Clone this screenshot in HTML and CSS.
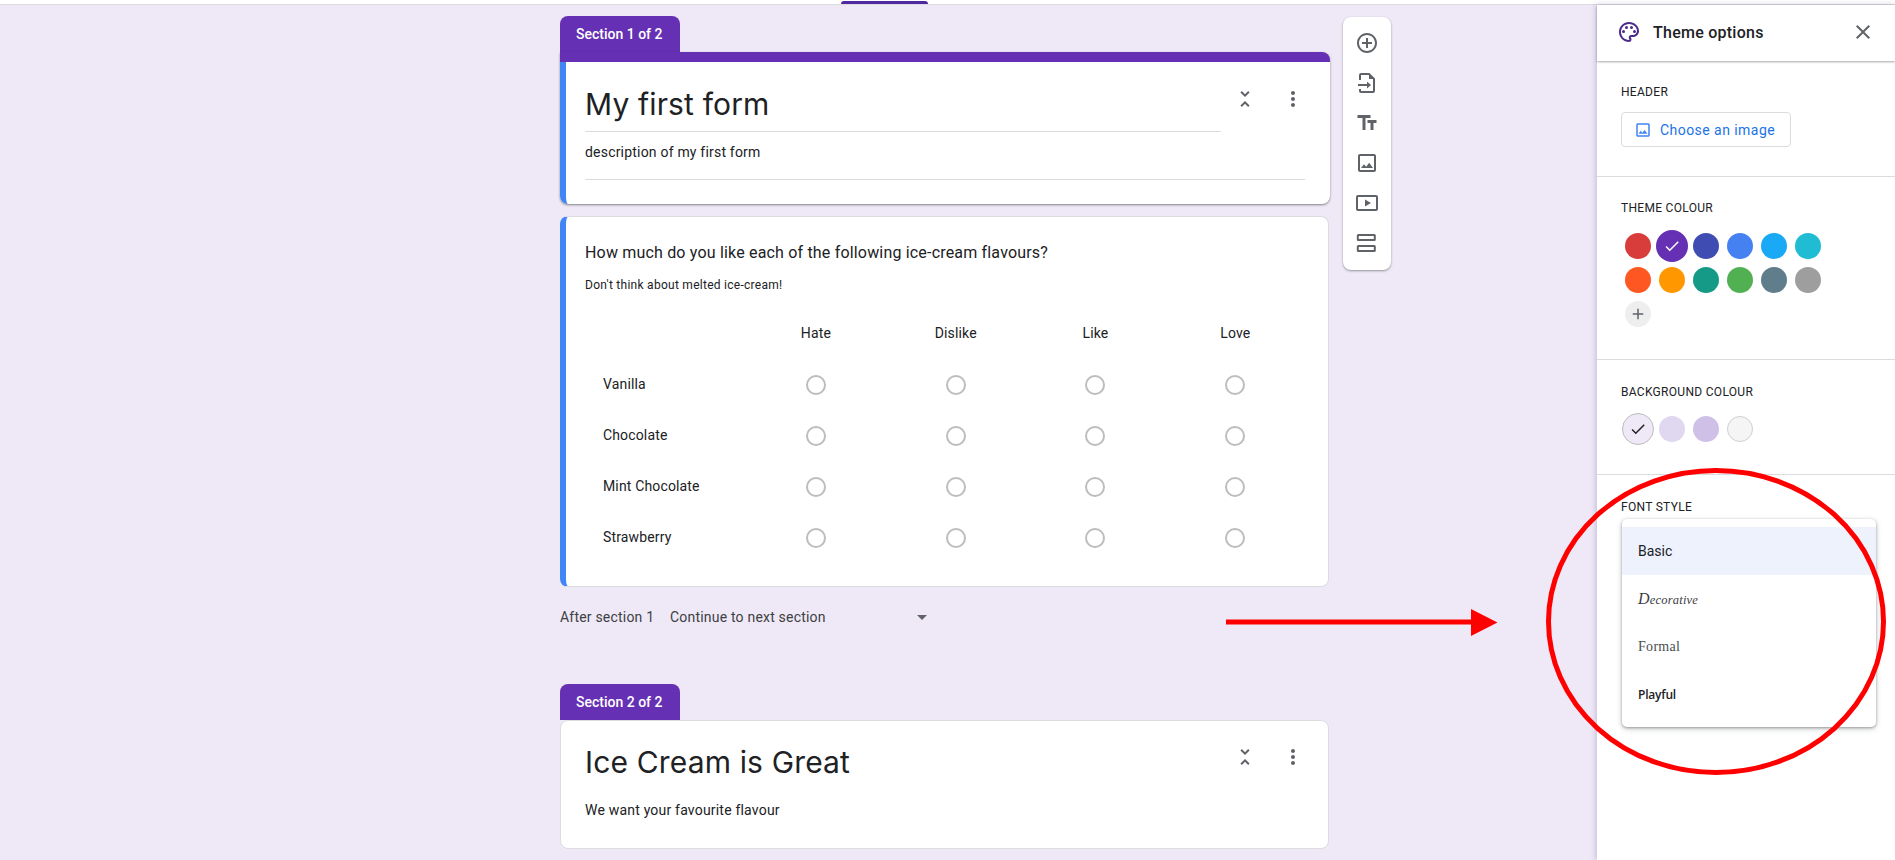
FILE: index.html
```html
<!DOCTYPE html>
<html lang="en">
<head>
    <meta charset="UTF-8">
    <meta name="viewport" content="width=device-width, initial-scale=1.0">
    <title>My first form</title>
    <link rel="stylesheet" href="styles.css">
</head>
<body>

    <div class="topbar"><div class="topbar-tab"></div></div>

    <div class="main">
        <div class="canvas">
            <div class="form-col">

                <div class="section-tab">Section 1 of 2</div>
                <div class="card-first">
                    <div class="card-first-body">
                        <div class="title-row">
                            <div class="form-title underlined">My first form</div>
                            <div class="actions">
                                <svg class="icon" viewBox="0 0 24 24"><path d="M7.41 18.59L8.83 20 12 16.83 15.17 20l1.41-1.41L12 14l-4.59 4.59zm9.18-13.18L15.17 4 12 7.17 8.83 4 7.41 5.41 12 10l4.59-4.59z"/></svg>
                                <svg class="icon" viewBox="0 0 24 24"><path d="M12 8c1.1 0 2-.9 2-2s-.9-2-2-2-2 .9-2 2 .9 2 2 2zm0 2c-1.1 0-2 .9-2 2s.9 2 2 2 2-.9 2-2-.9-2-2-2zm0 6c-1.1 0-2 .9-2 2s.9 2 2 2 2-.9 2-2-.9-2-2-2z"/></svg>
                            </div>
                        </div>
                        <div class="form-desc underlined">description of my first form</div>
                    </div>
                </div>

                <div class="card card-question">
                    <div class="question">How much do you like each of the following ice-cream flavours?</div>
                    <div class="question-sub">Don't think about melted ice-cream!</div>

                    <div class="grid">
                        <div></div>
                        <div class="grid-head">Hate</div>
                        <div class="grid-head">Dislike</div>
                        <div class="grid-head">Like</div>
                        <div class="grid-head">Love</div>

                        <div class="grid-label">Vanilla</div>
                        <div class="grid-cell"><span class="radio"></span></div>
                        <div class="grid-cell"><span class="radio"></span></div>
                        <div class="grid-cell"><span class="radio"></span></div>
                        <div class="grid-cell"><span class="radio"></span></div>

                        <div class="grid-label">Chocolate</div>
                        <div class="grid-cell"><span class="radio"></span></div>
                        <div class="grid-cell"><span class="radio"></span></div>
                        <div class="grid-cell"><span class="radio"></span></div>
                        <div class="grid-cell"><span class="radio"></span></div>

                        <div class="grid-label">Mint Chocolate</div>
                        <div class="grid-cell"><span class="radio"></span></div>
                        <div class="grid-cell"><span class="radio"></span></div>
                        <div class="grid-cell"><span class="radio"></span></div>
                        <div class="grid-cell"><span class="radio"></span></div>

                        <div class="grid-label">Strawberry</div>
                        <div class="grid-cell"><span class="radio"></span></div>
                        <div class="grid-cell"><span class="radio"></span></div>
                        <div class="grid-cell"><span class="radio"></span></div>
                        <div class="grid-cell"><span class="radio"></span></div>
                    </div>
                </div>

                <div class="after-section">
                    <span class="after-label">After section 1</span>
                    <span class="after-select">Continue to next section<span class="caret"></span></span>
                </div>

                <div class="section-tab section-tab-second">Section 2 of 2</div>
                <div class="card card-second">
                    <div class="title-row">
                        <div class="form-title">Ice Cream is Great</div>
                        <div class="actions">
                            <svg class="icon" viewBox="0 0 24 24"><path d="M7.41 18.59L8.83 20 12 16.83 15.17 20l1.41-1.41L12 14l-4.59 4.59zm9.18-13.18L15.17 4 12 7.17 8.83 4 7.41 5.41 12 10l4.59-4.59z"/></svg>
                            <svg class="icon" viewBox="0 0 24 24"><path d="M12 8c1.1 0 2-.9 2-2s-.9-2-2-2-2 .9-2 2 .9 2 2 2zm0 2c-1.1 0-2 .9-2 2s.9 2 2 2 2-.9 2-2-.9-2-2-2zm0 6c-1.1 0-2 .9-2 2s.9 2 2 2 2-.9 2-2-.9-2-2-2z"/></svg>
                        </div>
                    </div>
                    <div class="form-desc">We want your favourite flavour</div>
                </div>
            </div>

            <div class="toolbar">
                <svg class="icon" viewBox="0 0 24 24"><path d="M13 7h-2v4H7v2h4v4h2v-4h4v-2h-4V7zm-1-5C6.48 2 2 6.48 2 12s4.48 10 10 10 10-4.48 10-10S17.52 2 12 2zm0 18c-4.41 0-8-3.59-8-8s3.59-8 8-8 8 3.59 8 8-3.59 8-8 8z"/></svg>
                <svg class="icon" viewBox="0 0 24 24"><path class="line" d="M5 9V4a1 1 0 0 1 1-1h8l5 5v12a1 1 0 0 1-1 1H6a1 1 0 0 1-1-1v-2"/><path d="M14 3l5 5h-5z"/><path class="line" d="M3 14h10"/><path d="M12 10.5l4 3.5-4 3.5z"/></svg>
                <svg class="icon" viewBox="0 0 24 24"><path d="M2.5 4v3h5v12h3V7h5V4h-13zm19 5h-9v3h3v7h3v-7h3V9z"/></svg>
                <svg class="icon" viewBox="0 0 24 24"><path d="M19 5v14H5V5h14m0-2H5c-1.1 0-2 .9-2 2v14c0 1.1.9 2 2 2h14c1.1 0 2-.9 2-2V5c0-1.1-.9-2-2-2zm-4.86 8.86l-3 3.87L9 13.14 6 17h12l-3.86-5.14z"/></svg>
                <svg class="icon" viewBox="0 0 24 24"><rect class="line" x="2" y="5" width="20" height="14" rx="1"/><path d="M10 8.5l6 3.5-6 3.5z"/></svg>
                <svg class="icon" viewBox="0 0 24 24"><rect class="line" x="2.8" y="4" width="17" height="5" rx="0.5"/><rect class="line" x="2.8" y="15" width="17" height="5" rx="0.5"/></svg>
            </div>
        </div>

        <div class="side">
            <div class="side-head">
                <svg class="icon icon-palette" viewBox="0 0 24 24">
                    <path d="M12 22C6.49 22 2 17.51 2 12S6.49 2 12 2s10 4.04 10 9c0 3.31-2.69 6-6 6h-1.77c-.28 0-.5.22-.5.5 0 .12.05.23.13.33.41.47.64 1.06.64 1.67 0 1.38-1.12 2.5-2.5 2.5zm0-18c-4.41 0-8 3.59-8 8s3.59 8 8 8c.28 0 .5-.22.5-.5 0-.16-.08-.28-.14-.35-.41-.46-.63-1.05-.63-1.65 0-1.38 1.12-2.5 2.5-2.5H16c2.21 0 4-1.79 4-4 0-3.86-3.59-7-8-7z"/>
                    <circle cx="6.5" cy="11.5" r="1.5"/><circle cx="9.5" cy="7.5" r="1.5"/><circle cx="14.5" cy="7.5" r="1.5"/><circle cx="17.5" cy="11.5" r="1.5"/>
                </svg>
                <span class="side-title">Theme options</span>
                <svg class="icon icon-close" viewBox="0 0 24 24"><path d="M19 6.41L17.59 5 12 10.59 6.41 5 5 6.41 10.59 12 5 17.59 6.41 19 12 13.41 17.59 19 19 17.59 13.41 12z"/></svg>
            </div>

            <div class="side-section header-section">
                <div class="side-label">HEADER</div>
                <div class="image-btn">
                    <svg class="icon-small" viewBox="0 0 24 24"><path d="M19 5v14H5V5h14m0-2H5c-1.1 0-2 .9-2 2v14c0 1.1.9 2 2 2h14c1.1 0 2-.9 2-2V5c0-1.1-.9-2-2-2zm-4.86 8.86l-3 3.87L9 13.14 6 17h12l-3.86-5.14z"/></svg>
                    Choose an image
                </div>
            </div>

            <div class="side-section theme-section">
                <div class="side-label">THEME COLOUR</div>
                <div class="swatches">
                    <span class="swatch c-red"></span>
                    <span class="swatch swatch-on c-purple"><svg viewBox="0 0 24 24"><path d="M9 16.17L4.83 12l-1.42 1.41L9 19 21 7l-1.41-1.41z"/></svg></span>
                    <span class="swatch c-indigo"></span>
                    <span class="swatch c-blue"></span>
                    <span class="swatch c-sky"></span>
                    <span class="swatch c-cyan"></span>
                    <span class="swatch c-deep-orange"></span>
                    <span class="swatch c-orange"></span>
                    <span class="swatch c-teal"></span>
                    <span class="swatch c-green"></span>
                    <span class="swatch c-slate"></span>
                    <span class="swatch c-grey"></span>
                    <span class="swatch c-add"><svg viewBox="0 0 24 24"><path d="M19 13h-6v6h-2v-6H5v-2h6V5h2v6h6v2z"/></svg></span>
                </div>
            </div>

            <div class="side-section bg-section">
                <div class="side-label">BACKGROUND COLOUR</div>
                <div class="swatches">
                    <span class="swatch swatch-on bg-1"><svg viewBox="0 0 24 24"><path d="M9 16.17L4.83 12l-1.42 1.41L9 19 21 7l-1.41-1.41z"/></svg></span>
                    <span class="swatch bg-2"></span>
                    <span class="swatch bg-3"></span>
                    <span class="swatch bg-4"></span>
                </div>
            </div>

            <div class="font-section">
                <div class="side-label">FONT STYLE</div>
                <div class="font-menu">
                    <div class="font-item font-basic">Basic</div>
                    <div class="font-item font-decorative">Decorative</div>
                    <div class="font-item font-formal">Formal</div>
                    <div class="font-item font-playful">Playful</div>
                </div>
            </div>
        </div>
    </div>

    <!-- red marks drawn over the screenshot -->
    <svg class="marks" viewBox="0 0 1895 860">
        <rect x="1226" y="619.5" width="246" height="5" fill="#ff0000"/>
        <path d="M1471 609L1497.5 622.4 1471 636z" fill="#ff0000"/>
        <ellipse cx="1716" cy="621.5" rx="167.5" ry="151" fill="none" stroke="#ff0000" stroke-width="5"/>
    </svg>

</body>
</html>
```

FILE: styles.css
```css
html, body {
    margin: 0;
    height: 100%;
}

body {
    position: relative;
    height: 860px;
    overflow: hidden;
    font-family: Roboto, "Liberation Sans", sans-serif;
    color: #202124;
    background-color: #efe9f7;
}

.topbar {
    height: 3px;
    padding-top: 1px;
    background-color: #fff;
    border-bottom: 1px solid #dadce0;
}

.topbar-tab {
    width: 87px;
    height: 3px;
    margin-left: 841px;
    background-color: #5128a0;
    border-radius: 3px 3px 0 0;
}

.main {
    display: flex;
    height: 855px;
}

/* left part, with the form */
.canvas {
    flex: 1;
    display: flex;
    align-items: flex-start;
    gap: 13px;
    padding: 11px 0 0 560px;
}

.form-col {
    width: 770px;
}

.section-tab {
    width: 120px;
    height: 36px;
    line-height: 36px;
    box-sizing: border-box;
    padding-left: 16px;
    font-size: 14px;
    font-weight: 500;
    color: #fff;
    background-color: #6530b3;
    border-radius: 8px 8px 0 0;
}

.section-tab-second {
    margin-top: 57px;
}

.card {
    box-sizing: border-box;
    background-color: #fff;
    border-radius: 8px;
    border: 1px solid #dadce0;
}

.card-first {
    border-top: 10px solid #6530b3;
    border-radius: 0 8px 8px 8px;
    background-color: #fff;
    box-shadow: 0 1px 2px rgba(60, 64, 67, .5), 0 1px 3px rgba(60, 64, 67, .15);
}

.card-first-body {
    border-left: 6px solid #4285f4;
    border-radius: 0 0 8px 8px;
    padding: 0 25px 24px 19px;
}

.card-question {
    margin-top: 12px;
    width: 769px;
    border-left: 6px solid #4285f4;
    padding: 24px 0 23px 19px;
}

.card-second {
    width: 769px;
    padding: 21px 23px 28px 24px;
}

.title-row {
    display: flex;
}

.form-title {
    flex: 1;
    font-family: Inter, Roboto, sans-serif;
    font-size: 30px;
    line-height: 40px;
    letter-spacing: .15px;
    color: #202124;
}

.card-first .form-title {
    margin-top: 22px;
    padding-bottom: 7px;
}

.underlined {
    border-bottom: 1px solid #dadce0;
}

.actions {
    display: flex;
    gap: 24px;
    margin-left: 12px;
    padding-top: 3px;
    align-items: flex-start;
}

.card-first .actions {
    padding-top: 25px;
}

.icon {
    display: block;
    width: 24px;
    height: 24px;
    fill: #5f6368;
}

.icon .line {
    fill: none;
    stroke: #5f6368;
    stroke-width: 2;
}

.form-desc {
    font-size: 14px;
    line-height: 20px;
    letter-spacing: .2px;
    padding: 10px 0 17px;
}

.card-second .form-desc {
    padding: 18px 0 0;
}

.question {
    font-size: 16px;
    line-height: 24px;
    letter-spacing: .18px;
    color: #202124;
}

.question-sub {
    margin-top: 12px;
    font-size: 12px;
    line-height: 16px;
    letter-spacing: .27px;
}

/* matrix of radios */
.grid {
    display: grid;
    grid-template-columns: 143px repeat(4, 139.8px);
    grid-template-rows: 52px repeat(4, 51px);
    margin: 14px 0 0 18px;
    font-size: 14px;
    letter-spacing: .15px;
}

.grid-head, .grid-cell {
    display: flex;
    align-items: center;
    justify-content: center;
}

.grid-label {
    display: flex;
    align-items: center;
    padding-bottom: 1px;
}

.radio {
    width: 20px;
    height: 20px;
    box-sizing: border-box;
    border: 2px solid #bdbdbd;
    border-radius: 50%;
}

.after-section {
    display: flex;
    margin-top: 20px;
    font-size: 14px;
    line-height: 20px;
    letter-spacing: .2px;
    color: #3c4043;
}

.after-label {
    width: 110px;
}

.after-select {
    display: flex;
    justify-content: space-between;
    align-items: center;
    width: 257px;
}

.caret {
    width: 0;
    height: 0;
    border-left: 5px solid transparent;
    border-right: 5px solid transparent;
    border-top: 5px solid #5f6368;
}

.toolbar {
    display: flex;
    flex-direction: column;
    gap: 16px;
    width: 48px;
    box-sizing: border-box;
    margin-top: 1px;
    padding: 14px 12px 15px;
    background-color: #fff;
    border-radius: 8px;
    box-shadow: 0 1px 2px rgba(60, 64, 67, .4), 0 1px 3px rgba(60, 64, 67, .15);
}

/* theme panel */
.side {
    width: 298px;
    background-color: #fff;
    box-shadow: -1px 0 6px rgba(60, 40, 120, .25);
    position: relative;
}

.side-head {
    display: flex;
    align-items: center;
    height: 54px;
    padding: 0 20px 2px;
    box-shadow: 0 1px 2px rgba(60, 64, 67, .45);
    position: relative;
}

.icon-palette {
    fill: #4a2a8c;
}

.side-title {
    flex: 1;
    margin-left: 12px;
    font-size: 16px;
    font-weight: 500;
    letter-spacing: .25px;
}

.side-section {
    padding: 23px 0 32px 24px;
    border-bottom: 1px solid #dadce0;
}

.header-section {
    padding-bottom: 29px;
}

.bg-section {
    padding-top: 24px;
}

.font-section {
    padding: 24px 19px 0 24px;
}

.side-label {
    font-size: 12px;
    line-height: 16px;
    letter-spacing: .3px;
    color: #202124;
}

.image-btn {
    display: flex;
    align-items: center;
    gap: 8px;
    width: 170px;
    height: 35px;
    box-sizing: border-box;
    margin-top: 12px;
    padding-left: 12px;
    font-size: 14px;
    letter-spacing: .45px;
    color: #1a73e8;
    border: 1px solid #dadce0;
    border-radius: 4px;
}

.icon-small {
    width: 18px;
    height: 18px;
    fill: #4285f4;
}

.swatches {
    display: grid;
    grid-template-columns: repeat(6, 26px);
    grid-auto-rows: 26px;
    gap: 8px;
    margin: 17px 0 0 4px;
}

.bg-section .swatches {
    margin-top: 16px;
}

.swatch {
    display: flex;
    align-items: center;
    justify-content: center;
    box-sizing: border-box;
    border-radius: 50%;
}

.swatch svg {
    width: 18px;
    height: 18px;
}

.swatch-on {
    width: 32px;
    height: 32px;
    margin: -3px;
}

.c-red { background-color: #d93d3b; }
.c-purple { background-color: #6530b3; fill: #fff; }
.c-indigo { background-color: #3f4db3; }
.c-blue { background-color: #4681f2; }
.c-sky { background-color: #1aa9f4; }
.c-cyan { background-color: #1fbcd4; }
.c-deep-orange { background-color: #ff5722; }
.c-orange { background-color: #ff9800; }
.c-teal { background-color: #169a88; }
.c-green { background-color: #51b152; }
.c-slate { background-color: #607d8b; }
.c-grey { background-color: #9e9e9e; }
.c-add { background-color: #eee; fill: #5f6368; }

.bg-1 { background-color: #efe9f7; border: 1px solid #bdbdbd; fill: #202124; }
.bg-2 { background-color: #e0d7f0; }
.bg-3 { background-color: #cfc0e8; }
.bg-4 { background-color: #f5f5f5; border: 1px solid #cfcfcf; }

.font-menu {
    margin: 4px 0 0 1px;
    width: 254px;
    padding: 8px 0;
    background-color: #fff;
    border-radius: 5px;
    box-shadow: 0 1px 3px rgba(60, 64, 67, .45), 0 2px 6px rgba(60, 64, 67, .2);
}

.font-item {
    height: 48px;
    line-height: 48px;
    padding-left: 16px;
    font-size: 14px;
}

.font-basic {
    background-color: #edf2fc;
}

.font-decorative {
    font-family: "Liberation Serif", serif;
    font-style: italic;
    font-size: 12.5px;
    letter-spacing: .2px;
    color: #3c4043;
}

.font-decorative::first-letter {
    font-size: 16px;
}

.font-formal {
    font-family: "Liberation Serif", serif;
    font-size: 14px;
    letter-spacing: .3px;
    color: #4a4d50;
}

.font-playful {
    font-family: "Open Sans", sans-serif;
    font-weight: 600;
    font-size: 12px;
    letter-spacing: -.2px;
}

.marks {
    position: absolute;
    left: 0;
    top: 0;
    width: 1895px;
    height: 860px;
    pointer-events: none;
}
```
